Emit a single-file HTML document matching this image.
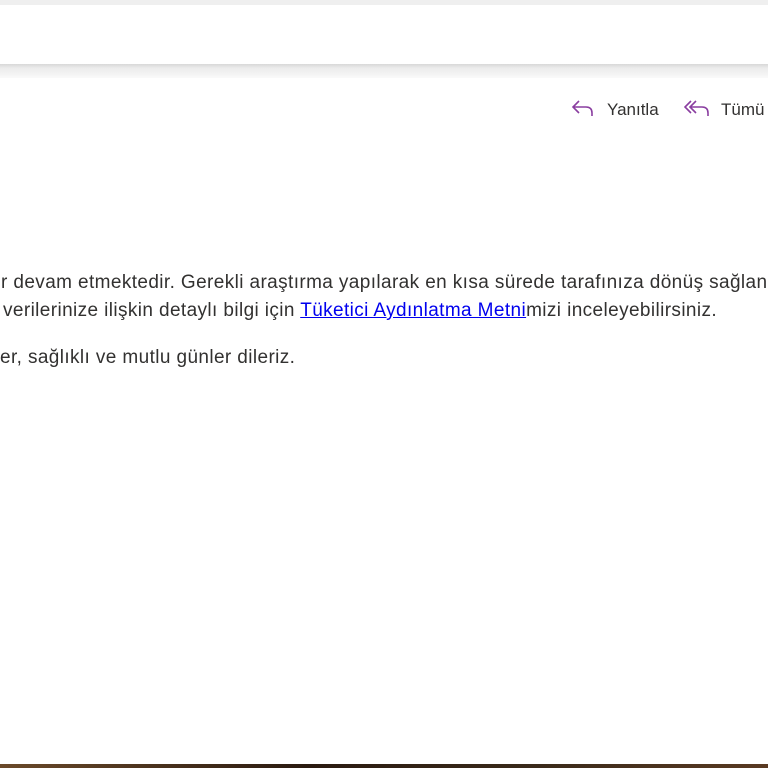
<!DOCTYPE html>
<html><head><meta charset="utf-8"><style>
html,body{margin:0;padding:0;width:768px;height:768px;overflow:hidden;background:#fff;font-family:"Liberation Sans",sans-serif;color:#323130}
.wrap{position:absolute;left:0;top:0;width:768px;height:768px;overflow:hidden}
.top{position:absolute;left:0;top:0;width:768px;height:5px;background:#efefef}
.bar{position:absolute;left:0;top:5px;width:768px;height:60px;background:#fff}
.sh{position:absolute;left:0;top:64px;width:768px;height:14px;background:linear-gradient(#d8d8d8,#ececec 30%,#f3f3f3 70%,#fafafa)}
.btn{position:absolute;top:100px;font-size:17px;color:#323130;white-space:nowrap}
.t{position:absolute;left:1px;font-size:19px;white-space:nowrap;letter-spacing:0.39px}
a{color:#0000ee;text-decoration:underline}
.bot{position:absolute;left:0;top:764px;width:768px;height:4px;background:linear-gradient(90deg,#6b4a2a,#2a1a10 40%,#3a2a1a 70%,#5a3a22)}
</style></head><body><div class="wrap">
<div class="top"></div><div class="bar"></div><div class="sh"></div>
<svg style="position:absolute;left:571px;top:99px" width="24" height="20" viewBox="0 0 24 20"><path d="M8 2 L2 8 L8 14 M2 8 H15 Q21 8 21 14 V17" fill="none" stroke="#8a3ea0" stroke-width="1.6"/></svg>
<div class="btn" style="left:607px">Yanıtla</div>
<svg style="position:absolute;left:684px;top:99px" width="28" height="20" viewBox="0 0 28 20"><path d="M7 2 L1 8 L7 14 M12 2 L6 8 L12 14 M6 8 H18 Q24 8 24 14 V17" fill="none" stroke="#8a3ea0" stroke-width="1.6"/></svg>
<div class="btn" style="left:721px">Tümü</div>
<div class="t" style="top:272px">r devam etmektedir. Gerekli araştırma yapılarak en kısa sürede tarafınıza dönüş sağlan</div>
<div class="t" style="top:300px;left:3px">verilerinize ilişkin detaylı bilgi için <a>Tüketici Aydınlatma Metni</a>mizi inceleyebilirsiniz.</div>
<div class="t" style="top:347px;left:0">er, sağlıklı ve mutlu günler dileriz.</div>
<div class="bot"></div>
</div></body></html>
